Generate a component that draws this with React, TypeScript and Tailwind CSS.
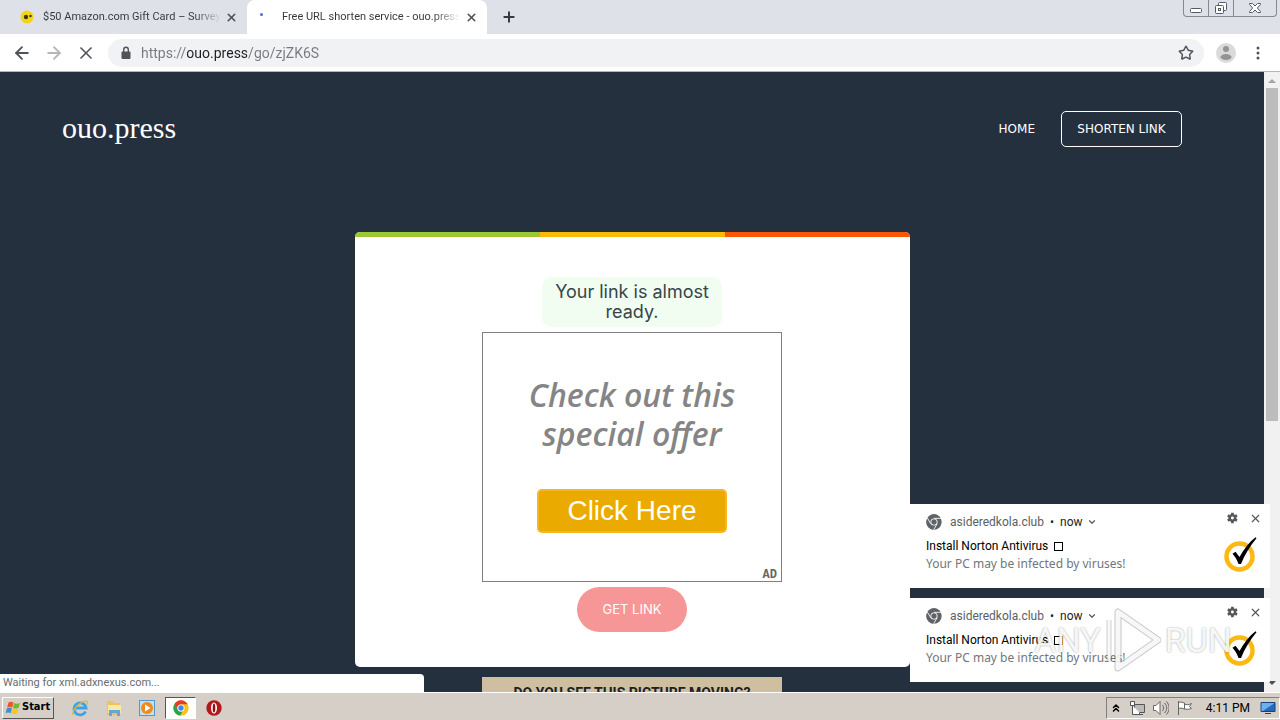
import type { ReactNode } from 'react'
import { ArrowLeft, ArrowRight, ChevronDown, ChevronsUp, Plus, Star, X } from 'lucide-react'

const notifications = [
  { id: 1, source: 'asideredkola.club', title: 'Install Norton Antivirus', body: 'Your PC may be infected by viruses!' },
  { id: 2, source: 'asideredkola.club', title: 'Install Norton Antivirus', body: 'Your PC may be infected by viruses!' },
]

function ChromeLogo({ mono = false }: { mono?: boolean }) {
  return (
    <svg viewBox="0 0 24 24" className="size-4" aria-hidden="true">
      <circle cx="12" cy="12" r="11.5" fill={mono ? '#5f6368' : '#fbc116'} />
      <path d="M2.2 6.1A11.5 11.5 0 0 1 22 6.3H12a5.7 5.7 0 0 0-5.2 8z" fill={mono ? '#5f6368' : '#e33b2e'} />
      <path d="M2.2 6.1l4.8 8.3a5.7 5.7 0 0 0 7.2 2.9l-3.4 6.1A11.5 11.5 0 0 1 2.2 6.1z" fill={mono ? '#5f6368' : '#2ba24c'} />
      {mono && <path d="M12 6.5h10.5M7.2 14.7L2 6M16.7 14.7l-5.2 8.8" stroke="#fff" strokeWidth="1.3" />}
      <circle cx="12" cy="12" r="5.3" fill="#fff" />
      <circle cx="12" cy="12" r="4" fill={mono ? '#5f6368' : '#4285f4'} />
    </svg>
  )
}

function NortonLogo() {
  return (
    <svg viewBox="0 0 34 36" className="h-9 w-[34px]" aria-hidden="true">
      <circle cx="15.5" cy="20.5" r="13" fill="#fff" stroke="#fdb913" strokeWidth="4.5" />
      <path d="M8.5 17.8l3-2 4 5.2C20 13 25 6 31.5 1.2l1 1C26 10 20.5 19 17 28h-2.5c-1.5-4-3.5-7.5-6-10.2z" fill="#000" />
    </svg>
  )
}

function Tab({ title, active = false, icon }: { title: string; active?: boolean; icon: ReactNode }) {
  return (
    <div className={active ? 'flex w-60 items-center rounded-t-lg bg-white pl-[7px] pr-2' : 'flex w-[247px] items-center pl-5 pr-2'}>
      <span className={active ? 'flex w-7 shrink-0' : 'flex w-[23px] shrink-0'}>{icon}</span>
      <span className="w-[178px] overflow-hidden whitespace-nowrap bg-linear-to-r from-[#33373c] from-85% to-transparent bg-clip-text text-[11px] leading-4 text-transparent">
        {title}
      </span>
      <button aria-label="Close tab" className="ml-auto flex size-4 items-center justify-center text-[#4c5055]">
        <X size={13} strokeWidth={2.8} />
      </button>
    </div>
  )
}

function WindowControls() {
  return (
    <div className="ml-auto mr-[3px] flex h-[17px] divide-x divide-[#858991] rounded-b border border-t-0 border-[#858991] text-[#555b65]">
      <button aria-label="Minimize" className="flex w-[25px] items-center justify-center">
        <svg viewBox="0 0 14 14" className="size-3.5" fill="#fff" stroke="currentColor">
          <rect x="1.5" y="7.5" width="11" height="4" rx="1" />
        </svg>
      </button>
      <button aria-label="Restore" className="flex w-[25px] items-center justify-center">
        <svg viewBox="0 0 14 14" className="size-3.5" fill="#fff" stroke="currentColor">
          <rect x="4.5" y="1.5" width="8" height="8" rx="1" />
          <rect x="1.5" y="4.5" width="8" height="8" rx="1" />
          <rect x="4.5" y="7.5" width="2" height="2" />
        </svg>
      </button>
      <button aria-label="Close" className="flex w-[42px] items-center justify-center">
        <svg viewBox="0 0 14 14" className="size-3.5" fill="#fff" stroke="currentColor">
          <path d="M1.5 2.5h3L7 5l2.5-2.5h3v1L9.3 7l3.2 3.5v1h-3L7 9l-2.5 2.5h-3v-1L4.7 7 1.5 3.5z" />
        </svg>
      </button>
    </div>
  )
}

function Toolbar() {
  return (
    <div className="flex h-[38px] shrink-0 items-center border-b border-[#b3b7bb] bg-white pl-3 pr-3.5 text-[#505459]">
      <div className="flex w-24 items-center gap-3">
        <button aria-label="Back"><ArrowLeft size={20} strokeWidth={2.2} /></button>
        <button aria-label="Forward" className="text-[#b4b6b9]"><ArrowRight size={20} strokeWidth={2.2} /></button>
        <button aria-label="Stop loading"><X size={20} strokeWidth={2} /></button>
      </div>
      <div className="flex h-7 flex-1 items-center rounded-full bg-[#f0f2f4] pl-3 pr-2.5">
        <svg viewBox="0 0 12 14" className="h-3.5 w-3" fill="none">
          <rect x="1.5" y="5.5" width="9" height="7.5" rx="1" fill="#505459" />
          <path d="M3.7 6V3.5a2.3 2.3 0 0 1 4.6 0V6" stroke="#505459" strokeWidth="1.4" />
        </svg>
        {/* the gradient stops darken only the host part of the address */}
        <input
          aria-label="Address"
          defaultValue="https://ouo.press/go/zjZK6S"
          className="ml-[9px] min-w-0 flex-1 bg-linear-[90deg,#767a7e_46px,#1d1f22_46px,#1d1f22_106px,#767a7e_106px] bg-clip-text text-[14px] leading-5 text-transparent outline-none"
        />
        <button aria-label="Bookmark this page"><Star size={16} strokeWidth={2.2} /></button>
      </div>
      <button aria-label="Profile" className="ml-3 flex size-5 items-center justify-center rounded-full bg-[#dadada]">
        <svg viewBox="0 0 20 20" className="size-5" fill="#949494">
          <circle cx="10" cy="6" r="3" />
          <ellipse cx="10" cy="14" rx="5.5" ry="3" />
        </svg>
      </button>
      <button aria-label="Menu" className="ml-3.5">
        <svg viewBox="0 0 16 16" className="size-4" fill="currentColor">
          <circle cx="8" cy="3" r="1.5" />
          <circle cx="8" cy="8" r="1.5" />
          <circle cx="8" cy="13" r="1.5" />
        </svg>
      </button>
    </div>
  )
}

function Scrollbar() {
  return (
    <div className="flex w-4 shrink-0 flex-col items-center bg-[#f1f1f1]" aria-hidden="true">
      <svg viewBox="0 0 16 16" className="size-4"><path d="M4 11h8L8 7z" fill="#a3a3a3" /></svg>
      <div className="h-[333px] w-3 bg-[#bdbdbd]" />
      <svg viewBox="0 0 16 16" className="mt-auto size-4"><path d="M4 5h8L8 9z" fill="#505050" /></svg>
    </div>
  )
}

function LinkCard() {
  return (
    <section className="mx-auto mt-[85px] w-[555px] overflow-hidden rounded-[5px] bg-white">
      <div className="grid h-[5px] grid-cols-3">
        <span className="bg-[#9bc834]" />
        <span className="bg-[#f9bb06]" />
        <span className="bg-[#fb5607]" />
      </div>
      <div className="flex flex-col items-center pb-[35px] pt-10">
        <h1 className="w-[180px] rounded-[10px] bg-[#f0fdf0] py-[5px] text-center font-['Inter',sans-serif] text-[18px] leading-5 text-[#37454a]">
          Your link is almost ready.
        </h1>
        <div className="relative mt-[5px] flex h-[250px] w-[300px] flex-col items-center border border-[#808080]">
          <p className="mt-[42px] w-[240px] text-center font-['Open_Sans','Noto_Sans',sans-serif] text-[32px] font-semibold italic leading-[39px] text-[#858585]">
            Check out this special offer
          </p>
          <a href="#offer" className="mt-9 h-11 w-[190px] rounded-[5px] border-2 border-[#f6b721] bg-[#ebaa00] text-center font-['Liberation_Sans',sans-serif] text-[28px] leading-10 text-white">
            Click Here
          </a>
          <span className="absolute bottom-0 right-1 font-['Liberation_Mono',monospace] text-[12px] font-bold leading-3 text-[#666]">AD</span>
        </div>
        <button className="mt-[5px] h-[45px] w-[110px] rounded-full bg-[#f69696] font-['Inter',sans-serif] text-[13px] text-white">
          GET LINK
        </button>
      </div>
    </section>
  )
}

function Notification({ source, title, body }: { source: string; title: string; body: string }) {
  return (
    <article className="flex h-[84px] justify-between bg-white pl-4 pr-2 pt-2 text-[12px]">
      <div className="text-[#222]">
        <div className="flex h-5 items-center text-[#5b5e62]">
          <ChromeLogo mono />
          <span className="ml-2">{source}</span>
          <span className="mx-1.5 text-[#222]">•</span>
          <span className="text-[#222]">now</span>
          <ChevronDown size={10} strokeWidth={3} className="ml-1" />
        </div>
        <h2 className="mt-1.5 flex items-center gap-1.5 leading-[17px] text-black">
          {title}
          <span className="size-[9px] border border-black" />
        </h2>
        <p className="font-['Noto_Sans',sans-serif] leading-[17px] text-[#72767a]">{body}</p>
      </div>
      <div className="flex flex-col items-end text-[#55595e]">
        <div className="flex h-3 items-center gap-2.5">
          <button aria-label="Notification settings">
            <svg viewBox="0 0 24 24" className="size-3.5" fill="currentColor">
              <path fillRule="evenodd" d="M19.4 13l.1-1-.1-1 2.2-1.7-2-3.6-2.7 1a8 8 0 0 0-1.7-1L14.8 3h-4.2l-.4 2.7a8 8 0 0 0-1.7 1l-2.7-1-2 3.6L6 11l-.1 1 .1 1-2.2 1.700 2 3.600 2.700-1a8 8 0 0 0 1.700 1l.4 2.700h4.200l.4-2.700a8 8 0 0 0 1.700-1l2.700 1 2-3.600zM12.700 14.500a2.500 2.500 0 1 1 0-5 2.500 2.500 0 0 1 0 5z" />
            </svg>
          </button>
          <button aria-label="Dismiss"><X size={13} strokeWidth={2.2} /></button>
        </div>
        <div className="mr-1 mt-3"><NortonLogo /></div>
      </div>
    </article>
  )
}

function Watermark() {
  return (
    <div className="absolute bottom-5 right-12 flex h-[64px] items-center gap-1 text-[34px] leading-none text-white/90 text-shadow-[0_0_2px_rgb(0_0_0/0.4)]">
      <span>ANY</span>
      <svg viewBox="0 0 56 64" className="h-[64px] w-14" fill="none" strokeLinejoin="round" aria-hidden="true">
        <path d="M13 4v56l40-28z" stroke="#00000038" strokeWidth="7" />
        <path d="M4 12v41" stroke="#00000030" strokeWidth="5" />
        <path d="M13 4v56l40-28z" stroke="#ffffffd9" strokeWidth="5" />
        <path d="M4 12v41" stroke="#ffffffd9" strokeWidth="3" />
      </svg>
      <span>RUN</span>
    </div>
  )
}

function Taskbar() {
  return (
    <footer className="flex h-7 shrink-0 items-center border-t border-white bg-[#d5cfc7] pl-0.5 pt-0.5 text-[11px] text-black">
      <button className="flex h-[22px] w-[52px] items-center gap-px border border-b-[#555] border-l-white border-r-[#555] border-t-white font-['DejaVu_Sans_Condensed','DejaVu_Sans',sans-serif] text-[11px] font-bold">
        <svg viewBox="0 0 16 16" className="ml-0.5 size-4 shrink-0">
          <path d="M3.5 2.5c2-1 3.5-.8 5 .2L7.2 7.5c-1.5-1-3-1-5-.2z" fill="#e8562a" />
          <path d="M9.2 3.1c1.6 1 3.5 1 5.8 0l-1.5 4.8c-2 1-3.8.8-5.5 0z" fill="#79b62f" />
          <path d="M2 8.2c2-.8 3.5-.8 5 .2l-1.4 4.8c-1.5-1-3-1-5-.2z" fill="#3a8fd6" />
          <path d="M7.8 8.8c1.6.9 3.4 1 5.5.1l-1.4 4.7c-2 1-3.8.9-5.5 0z" fill="#f7c51e" />
        </svg>
        Start
      </button>
      <nav aria-label="Quick launch" className="ml-4 flex items-center">
        <button aria-label="Internet Explorer" className="w-[34px] pl-px">
          <svg viewBox="0 0 18 18" className="size-[18px]" fill="none">
            <path d="M14.5 12.5a6 6 0 1 1 .5-3.5H5" stroke="#39a5e4" strokeWidth="2.8" />
            <path d="M2.5 16C-.5 13 9 2 15.5 2.2c1.5.2 1.2 2 .3 3.5" stroke="#e5b437" strokeWidth="1.3" />
          </svg>
        </button>
        <button aria-label="File Explorer" className="w-[34px] pl-px">
          <svg viewBox="0 0 18 18" className="size-[18px]">
            <path d="M2 2h6l1 2h6v12H2z" fill="#edc45c" />
            <path d="M3 6h13v8H3z" fill="#fae9a6" />
            <path d="M4 17v-6h11v6h-3v-3H7v3z" fill="#5ea9d9" />
          </svg>
        </button>
        <button aria-label="Media Player" className="w-[27px]">
          <svg viewBox="0 0 18 18" className="size-[18px]">
            <rect x="1.5" y="1.5" width="15" height="15" fill="#c2dff3" stroke="#5298cc" />
            <circle cx="9" cy="9" r="6" fill="#f18a1c" />
            <path d="M7 5.5l5.5 3.5L7 12.5z" fill="#fff" />
          </svg>
        </button>
        <button aria-label="Chrome" className="flex h-[22px] w-[31px] items-center justify-center border border-b-white border-l-[#555] border-r-white border-t-[#555] bg-white">
          <ChromeLogo />
        </button>
        <button aria-label="Opera" className="ml-2.5">
          <svg viewBox="0 0 16 16" className="size-4">
            <circle cx="8" cy="8" r="7.7" fill="#b3161b" />
            <ellipse cx="8" cy="8" rx="3" ry="5.6" fill="#fff" />
            <ellipse cx="8" cy="8" rx="1.3" ry="4.5" fill="#8e1015" />
          </svg>
        </button>
      </nav>
      <div className="ml-auto flex h-[22px] w-[174px] items-center border border-b-white border-l-[#808080] border-r-white border-t-[#808080] px-[3px]">
        <button aria-label="Show hidden icons"><ChevronsUp size={12} strokeWidth={3} /></button>
        <svg viewBox="0 0 16 16" className="ml-[7px] size-4" fill="#fff" stroke="#555">
          <path d="M5.5 4.5h10v8h-10z" fill="#bbb" />
          <path d="M1.5 1.5h4v4h-4zM3.5 5.5v9h9M7 14.5h7M10.5 12.5v2" />
        </svg>
        <svg viewBox="0 0 16 16" className="ml-2 size-4" fill="#fff" stroke="#666">
          <path d="M.5 5.5H3l4-4v13l-4-4H.5z" />
          <path d="M9.5 5c1.5 2 1.5 4 0 6M11.5 3c3 3 3 7 0 10M13.5 1.5c3.5 4 3.5 9 0 13" fill="none" />
        </svg>
        <svg viewBox="0 0 16 16" className="ml-2 size-4" fill="#fff" stroke="#666">
          <path d="M1.5 1v14M1.5 2.5c3-1 4 0 6 .5v6c-2-.5-3-1.5-6-.5zM7.5 4c2 1 4 1 7-.5l-2 3 2 2c-3 1-5 1-7 .5" />
        </svg>
        <time className="ml-auto mr-2.5 text-[12px]">4:11 PM</time>
        <svg viewBox="0 0 16 16" className="size-4">
          <path d="M1 2.5h14v9H1z" fill="#2769bd" stroke="#17427c" />
          <path d="M1.5 3h13L3 11H1.5z" fill="#6db0ed" />
          <path d="M5 13.5h6" stroke="#345" />
        </svg>
      </div>
    </footer>
  )
}

export default function App() {
  return (
    <div className="flex h-screen flex-col overflow-hidden font-['Roboto','Noto_Sans',sans-serif]">
      <header className="flex h-[34px] shrink-0 bg-[#dee1e7]">
        <Tab
          title="$50 Amazon.com Gift Card – Survey"
          icon={
            <svg viewBox="0 0 14 14" className="size-3.5">
              <circle cx="7" cy="7" r="6.5" fill="#f5d512" />
              <circle cx="6" cy="7" r="2.2" fill="#3c3520" />
              <circle cx="10.5" cy="6" r="1.2" fill="#3c3520" />
            </svg>
          }
        />
        <Tab active title="Free URL shorten service - ouo.press" icon={<span className="mb-1.5 ml-1.5 size-[3px] rounded-full bg-[#4a6ed0]" />} />
        <button aria-label="New tab" className="ml-3.5 text-[#363a40]"><Plus size={16} strokeWidth={3} /></button>
        <WindowControls />
      </header>
      <Toolbar />
      <div className="relative flex min-h-0 flex-1 overflow-hidden">
        <main className="flex-1 overflow-hidden bg-[#25303f]">
          <div className="mt-[39px] flex h-9 items-center justify-between pl-[62px] pr-[82px] text-white">
            <a href="#top" className="pb-0.5 font-['Liberation_Serif',serif] text-[30px] leading-8">ouo.press</a>
            <nav className="flex items-center gap-[26px] font-['DejaVu_Sans',sans-serif] text-[12px]">
              <a href="#home">HOME</a>
              <a href="#shorten" className="flex h-9 w-[121px] items-center justify-center rounded-[5px] border border-white">SHORTEN LINK</a>
            </nav>
          </div>
          <LinkCard />
          <div className="mx-auto mt-2.5 h-[250px] w-[300px] bg-[#cfbfa0] pt-2 text-center text-[14px] font-bold leading-4 text-[#22201c]">
            DO YOU SEE THIS PICTURE MOVING?
          </div>
        </main>
        <Scrollbar />
        <div className="absolute bottom-0 left-0 h-[18px] w-[424px] rounded-tr bg-white pl-[3px] text-[11px] leading-[18px] text-[#686c70]">
          Waiting for xml.adxnexus.com...
        </div>
        <div className="absolute bottom-2.5 right-2.5 flex w-[360px] flex-col gap-2.5">
          {notifications.map((item) => (
            <Notification key={item.id} source={item.source} title={item.title} body={item.body} />
          ))}
        </div>
        <Watermark />
      </div>
      <Taskbar />
    </div>
  )
}
